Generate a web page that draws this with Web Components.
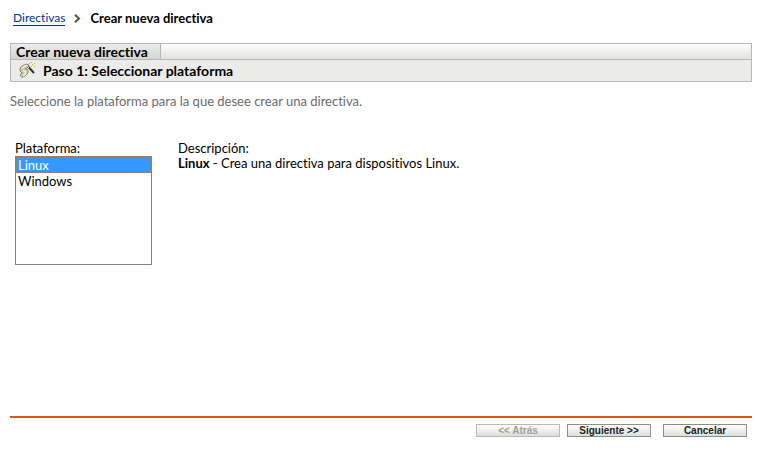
<!DOCTYPE html>
<html lang="es">
<head>
<meta charset="utf-8">
<title>Crear nueva directiva</title>
<style>
    body {
        margin: 0;
        background: #fff;
        color: #000;
        font: 13px/15px "Lato", "Open Sans", sans-serif;
        font-variant-ligatures: none;
    }
</style>
</head>
<body>
<policy-wizard>
    <bread-crumb slot="nav" parent="Directivas" current="Crear nueva directiva"></bread-crumb>
    <step-header slot="header" heading="Crear nueva directiva">Paso 1: Seleccionar plataforma</step-header>
    <span slot="intro">Seleccione la plataforma para la que desee crear una directiva.</span>
    <platform-picker></platform-picker>
    <wizard-actions slot="actions"></wizard-actions>
</policy-wizard>

<script>
class PolicyWizard extends HTMLElement {
    constructor() {
        super();
        this.attachShadow({ mode: 'open' });
    }

    connectedCallback() {
        this.render();
    }

    render() {
        this.shadowRoot.innerHTML = `
            <style>
                :host {
                    display: flex;
                    flex-direction: column;
                    box-sizing: border-box;
                    min-height: 100vh;
                    padding: 11px 11px 37px 10px;
                }

                main {
                    flex: 1;
                }

                p {
                    margin: 12px 0 32px;
                    color: #6b6b6b;
                }
            </style>
            <slot name="nav"></slot>
            <main>
                <slot name="header"></slot>
                <p><slot name="intro"></slot></p>
                <slot></slot>
            </main>
            <slot name="actions"></slot>
        `;
    }
}

class BreadCrumb extends HTMLElement {
    constructor() {
        super();
        this.attachShadow({ mode: 'open' });
    }

    connectedCallback() {
        this.render();
    }

    get parent() {
        return this.getAttribute('parent');
    }

    get current() {
        return this.getAttribute('current');
    }

    render() {
        this.shadowRoot.innerHTML = `
            <style>
                :host {
                    display: block;
                    padding: 0 3px;
                    margin-bottom: 17px;
                }

                nav {
                    display: flex;
                    align-items: center;
                    gap: 9px;
                }

                a {
                    color: #039;
                    text-decoration: none;
                    border-bottom: 1px solid #039;
                    font-size: 12px;
                    line-height: 14px;
                }

                b {
                    font-weight: bold;
                }
            </style>
            <nav>
                <a href="#">${this.parent}</a>
                <svg width="7" height="9" viewBox="0 0 7 9" aria-hidden="true">
                    <path d="M1 .8 5 4.5 1 8.2" fill="none" stroke="#555" stroke-width="2"/>
                </svg>
                <b>${this.current}</b>
            </nav>
        `;
    }
}

class StepHeader extends HTMLElement {
    constructor() {
        super();
        this.attachShadow({ mode: 'open' });
    }

    connectedCallback() {
        this.render();
    }

    get heading() {
        return this.getAttribute('heading');
    }

    render() {
        this.shadowRoot.innerHTML = `
            <style>
                :host {
                    display: block;
                    border: 1px solid #b6b8b5;
                    background: #ebebe9;
                }

                h1, h2 {
                    margin: 0;
                    font-size: 14px;
                    font-weight: bold;
                    line-height: 15px;
                }

                .bar {
                    display: flex;
                    border-bottom: 1px solid #b6b8b5;
                    background: linear-gradient(#fff, #e0e2de);
                }

                h1 {
                    padding: 0 12px 0 5px;
                    border-right: 1px solid #b6b8b5;
                    background: linear-gradient(#ececea, #d3d5d1);
                }

                .step {
                    display: flex;
                    align-items: center;
                    gap: 8px;
                    padding: 2px 8px;
                }
            </style>
            <div class="bar"><h1>${this.heading}</h1></div>
            <div class="step">
                <svg width="16" height="17" viewBox="0 0 16 17" aria-hidden="true">
                    <path d="M1 6 3 4 7 2 10 3 9 5 6 7 9 8 9 11 6 14 3 15.500 1 13 3 11 1 9Z" fill="#c6c6a8" stroke="#8c8c74"/>
                    <path d="M2.500 6.500 6 4 8 3.500M4 8.500 7 9.500 6 12 4 14" fill="none" stroke="#efefdc" stroke-width="1.500"/>
                    <path d="M9 4.500 15 11" stroke="#33332b" stroke-width="2"/>
                    <path d="M8 3.500 10 6" stroke="#deded2"/>
                    <path d="M10 1h1v1h-1zM13 2h1v1h-1zM15 1h1v1h-1zM12 4h1v1h-1zM15 4h1v1h-1zM12 0h1v1h-1z" fill="#e0b100"/>
                </svg>
                <h2><slot></slot></h2>
            </div>
        `;
    }
}

class PlatformPicker extends HTMLElement {
    constructor() {
        super();
        this.attachShadow({ mode: 'open' });
    }

    connectedCallback() {
        this.render();
        this.shadowRoot.querySelector('select').addEventListener('change', (e) => {
            this.shadowRoot.querySelector('b').textContent = e.target.value;
            this.shadowRoot.querySelector('.name').textContent = e.target.value;
        });
    }

    render() {
        this.shadowRoot.innerHTML = `
            <style>
                :host {
                    display: flex;
                    gap: 26px;
                    padding: 0 5px;
                }

                label {
                    display: block;
                }

                select {
                    display: block;
                    box-sizing: border-box;
                    width: 137px;
                    height: 109px;
                    padding: 0;
                    border: 1px solid #7f828c;
                    border-radius: 0;
                    outline: none;
                    background: #fff;
                    color: #000;
                    font: inherit;
                    overflow: hidden;
                }

                option {
                    height: 16px;
                    min-height: 0;
                    padding: 0 2px;
                }

                option:checked {
                    background: #39f linear-gradient(#39f, #39f);
                    color: #fff;
                    outline: 1px dotted #a87855;
                    outline-offset: -1px;
                }
            </style>
            <div>
                <label for="platform">Plataforma:</label>
                <select id="platform" size="6">
                    <option selected>Linux</option>
                    <option>Windows</option>
                </select>
            </div>
            <div>
                <div>Descripción:</div>
                <div><b>Linux</b> - Crea una directiva para dispositivos <span class="name">Linux</span>.</div>
            </div>
        `;
    }
}

class WizardActions extends HTMLElement {
    constructor() {
        super();
        this.attachShadow({ mode: 'open' });
    }

    connectedCallback() {
        this.render();
    }

    render() {
        this.shadowRoot.innerHTML = `
            <style>
                :host {
                    display: flex;
                    justify-content: flex-end;
                    gap: 7px;
                    padding: 6px 5px 0;
                    border-top: 2px solid #d9571b;
                }

                button {
                    box-sizing: border-box;
                    width: 84px;
                    height: 13px;
                    padding: 0;
                    border: 1px solid #8c8e8b;
                    background: linear-gradient(#fff, #dcdedb);
                    color: #222;
                    font: bold 10px/11px "Liberation Sans", Arial, sans-serif;
                }

                button:disabled {
                    border-color: #b8bab7;
                    color: #a0a0a0;
                }

                .cancel {
                    margin-left: 5px;
                }
            </style>
            <button type="button" disabled>&lt;&lt; Atrás</button>
            <button type="button">Siguiente &gt;&gt;</button>
            <button type="button" class="cancel">Cancelar</button>
        `;
    }
}

customElements.define('policy-wizard', PolicyWizard);
customElements.define('bread-crumb', BreadCrumb);
customElements.define('step-header', StepHeader);
customElements.define('platform-picker', PlatformPicker);
customElements.define('wizard-actions', WizardActions);
</script>
</body>
</html>
